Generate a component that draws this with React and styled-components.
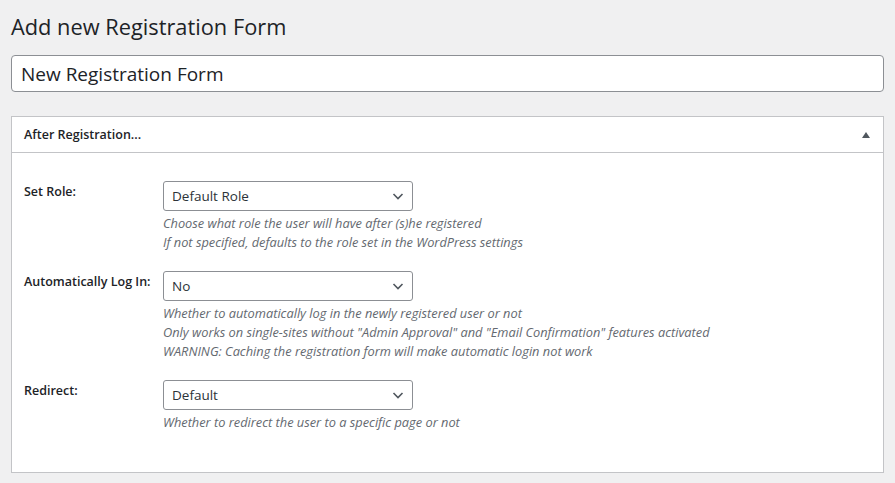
import React from 'react';
import styled, { createGlobalStyle } from 'styled-components';

const Global = createGlobalStyle`
    html, body {
        margin: 0;
        padding: 0;
        background: #f0f0f1;
    }
    body {
        font-family: 'Open Sans', 'Noto Sans', sans-serif;
        color: #1d2327;
    }
`;

const Page = styled.div`
    padding: 12px 11px 0 11px;
`;

const Title = styled.h1`
    margin: 0;
    font-size: 21.8px;
    font-weight: 400;
    line-height: 29px;
    color: #1d2327;
`;

const NameInput = styled.input`
    display: block;
    box-sizing: border-box;
    width: 100%;
    height: 37px;
    margin-top: 14px;
    padding: 0 9px;
    border: 1px solid #8c8f94;
    border-radius: 4px;
    background: #fff;
    font-family: inherit;
    font-size: 19px;
    color: #1d2327;
    outline: none;
`;

const Panel = styled.div`
    margin-top: 24px;
    background: #fff;
    border: 1px solid #c3c4c7;
    padding-bottom: 40px;
`;

const PanelHeader = styled.div`
    display: flex;
    align-items: center;
    justify-content: space-between;
    height: 35px;
    padding: 0 13px 0 12px;
    border-bottom: 1px solid #c3c4c7;
    h2 {
        margin: 0;
        font-size: 12.5px;
        font-weight: 600;
    }
`;

const Toggle = styled.span`
    width: 0;
    height: 0;
    border-left: 4.5px solid transparent;
    border-right: 4.5px solid transparent;
    border-bottom: 6px solid #50575e;
`;

const Body = styled.div`
    padding: 28px 12px 0 12px;
    display: flex;
    flex-direction: column;
    gap: 19px;
`;

const Row = styled.div`
    display: flex;
    align-items: flex-start;
`;

const Label = styled.label`
    width: 139px;
    flex-shrink: 0;
    padding-top: 2px;
    font-size: 12.5px;
    font-weight: 600;
    line-height: 18px;
`;

const Field = styled.div`
    display: flex;
    flex-direction: column;
`;

const SelectBox = styled.div`
    box-sizing: border-box;
    width: 250px;
    height: 30px;
    display: flex;
    align-items: center;
    justify-content: space-between;
    padding: 0 6px 0 8px;
    border: 1px solid #8c8f94;
    border-radius: 3px;
    background: #fff;
    font-size: 13.5px;
    color: #2c3338;
`;

const Desc = styled.p`
    margin: 3px 0 0 0;
    font-size: 12.8px;
    font-style: italic;
    line-height: 19px;
    color: #646970;
`;

const Chevron = () => (
    <svg width="16" height="16" viewBox="0 0 16 16" fill="none">
        <path d="M3.5 6 L8 10.5 L12.5 6" stroke="#50575e" strokeWidth="1.6" />
    </svg>
);

const rows = [
    {
        label: 'Set Role:',
        value: 'Default Role',
        desc: [
            'Choose what role the user will have after (s)he registered',
            'If not specified, defaults to the role set in the WordPress settings',
        ],
    },
    {
        label: 'Automatically Log In:',
        value: 'No',
        desc: [
            'Whether to automatically log in the newly registered user or not',
            'Only works on single-sites without "Admin Approval" and "Email Confirmation" features activated',
            'WARNING: Caching the registration form will make automatic login not work',
        ],
    },
    {
        label: 'Redirect:',
        value: 'Default',
        desc: ['Whether to redirect the user to a specific page or not'],
    },
];

const App = () => (
    <Page>
        <Global />
        <Title>Add new Registration Form</Title>
        <NameInput defaultValue="New Registration Form" />
        <Panel>
            <PanelHeader>
                <h2>After Registration...</h2>
                <Toggle />
            </PanelHeader>
            <Body>
                {rows.map((r) => (
                    <Row key={r.label}>
                        <Label>{r.label}</Label>
                        <Field>
                            <SelectBox>
                                <span>{r.value}</span>
                                <Chevron />
                            </SelectBox>
                            <Desc>
                                {r.desc.map((d, i) => (
                                    <React.Fragment key={i}>
                                        {d}
                                        {i < r.desc.length - 1 && <br />}
                                    </React.Fragment>
                                ))}
                            </Desc>
                        </Field>
                    </Row>
                ))}
            </Body>
        </Panel>
    </Page>
);

export default App;
